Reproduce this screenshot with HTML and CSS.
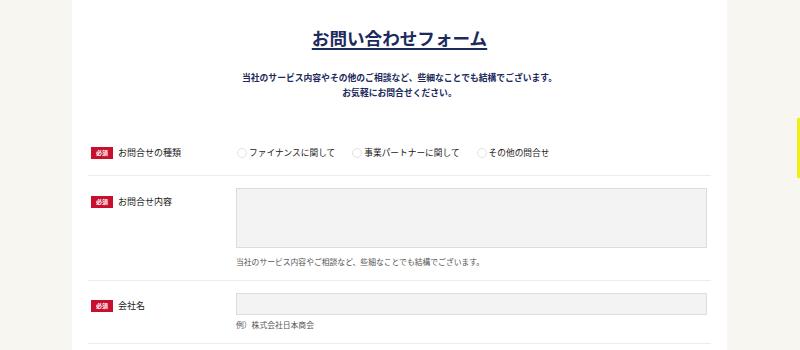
FILE: index.html
```html
<!DOCTYPE html>
<html lang="ja">
<head>
<meta charset="utf-8">
<title>お問い合わせフォーム</title>
<link rel="stylesheet" href="styles.css">
</head>
<body>
<div class="panel">
  <h1 class="title"><span>お問い合わせフォーム</span></h1>
  <p class="lead">当社のサービス内容やその他のご相談など、些細なことでも結構でございます。<br>お気軽にお問合せください。</p>

  <div class="row row-center">
    <div class="label"><span class="badge">必須</span><span class="label-text">お問合せの種類</span></div>
    <div class="field radios">
      <label class="radio"><span class="circle"></span>ファイナンスに関して</label>
      <label class="radio"><span class="circle"></span>事業パートナーに関して</label>
      <label class="radio"><span class="circle"></span>その他の問合せ</label>
    </div>
  </div>

  <div class="row">
    <div class="label label-top"><span class="badge">必須</span><span class="label-text">お問合せ内容</span></div>
    <div class="field">
      <div class="textarea"></div>
      <p class="help help-wide">当社のサービス内容やご相談など、些細なことでも結構でございます。</p>
    </div>
  </div>

  <div class="row">
    <div class="label label-top2"><span class="badge">必須</span><span class="label-text">会社名</span></div>
    <div class="field">
      <div class="input"></div>
      <p class="help">例）株式会社日本商会</p>
    </div>
  </div>
</div>
<div class="side-tab"></div>
</body>
</html>
```

FILE: styles.css
```css
html, body {
  margin: 0;
  padding: 0;
}
body {
  background: #f8f6f1;
  font-family: "Noto Sans CJK JP", "Noto Sans", sans-serif;
  color: #333;
  height: 350px;
  overflow: hidden;
}
.panel {
  width: 623px;
  margin: 0 0 0 72px;
  padding: 0 16px;
  background: #fff;
  min-height: 350px;
}
.title {
  margin: 0;
  padding-top: 26px;
  text-align: center;
  font-size: 17.6px;
  line-height: 24px;
  font-weight: 700;
  color: #1c2a5c;
}
.title span {
  text-decoration: underline;
  text-decoration-thickness: 1.5px;
  text-underline-offset: 3px;
}
.lead {
  margin: 20px 0 0;
  text-align: center;
  font-size: 8.8px;
  line-height: 15px;
  font-weight: 700;
  color: #1c2a5c;
}
.row {
  display: flex;
  align-items: flex-start;
  padding: 12px 4px 12px 3px;
  border-bottom: 1px solid #ececec;
}
.row-center {
  margin-top: 31px;
  align-items: center;
  min-height: 20px;
}
.label {
  width: 145px;
  flex: none;
  display: flex;
  align-items: center;
}
.label-top { padding-top: 7px; }
.label-top2 { padding-top: 6px; }
.badge {
  display: inline-flex;
  align-items: center;
  justify-content: center;
  width: 22px;
  height: 12px;
  background: #c8102e;
  color: #fff;
  font-size: 6px;
  font-weight: 700;
  line-height: 1;
  margin-right: 5px;
}
.label-text {
  font-size: 9px;
  line-height: 14px;
  color: #222;
}
.field {
  flex: 1;
}
.radios {
  display: flex;
  align-items: center;
  gap: 16px;
  font-size: 8.7px;
  line-height: 14px;
  color: #222;
}
.radio {
  display: flex;
  align-items: center;
  padding-left: 1px;
}
.circle {
  width: 8px;
  height: 8px;
  border: 1px solid #e2e2e2;
  border-radius: 50%;
  margin-right: 2px;
  background: #fff;
}
.textarea {
  height: 58px;
  background: #f3f3f3;
  border: 1px solid #dcdcdc;
}
.input {
  height: 20px;
  background: #f3f3f3;
  border: 1px solid #dcdcdc;
}
.help {
  margin: 4px 0 0;
  font-size: 7.8px;
  line-height: 12px;
  color: #555;
}
.help-wide { margin-top: 8px; }
.side-tab {
  position: fixed;
  right: 0;
  top: 118px;
  width: 3px;
  height: 60px;
  background: #f2ee1a;
}
```
